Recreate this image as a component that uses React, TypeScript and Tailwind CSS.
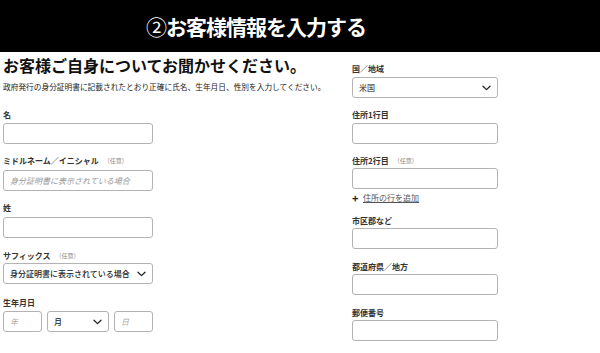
import React from "react";

const F = { fontFamily: '"Noto Sans CJK JP", "Noto Sans", sans-serif' };

function Chevron() {
  return (
    <svg width="9" height="6" viewBox="0 0 9 6" className="shrink-0">
      <path d="M1 1.2 L4.5 4.6 L8 1.2" fill="none" stroke="#222" strokeWidth="1.3" strokeLinecap="round" strokeLinejoin="round" />
    </svg>
  );
}

function Label({ text, opt }: { text: string; opt?: boolean }) {
  return (
    <div className="h-[12px] leading-[12px] text-[8px] font-bold text-[#333] flex items-center whitespace-nowrap">
      {text}
      {opt && <span className="ml-[5px] text-[6px] font-normal text-[#888]">（任意）</span>}
    </div>
  );
}

function Box({ w = "w-[150px]", children, cls = "" }: { w?: string; children?: React.ReactNode; cls?: string }) {
  return (
    <div className={`${w} h-[21px] border border-[#b3b3b3] rounded-[3px] bg-white flex items-center px-[6px] ${cls}`}>
      {children}
    </div>
  );
}

export default function App() {
  return (
    <div className="w-[600px] h-[353px] bg-white overflow-hidden" style={F}>
      <div className="h-[52px] bg-black flex items-center pl-[146px]">
        <span className="text-white font-bold text-[21px] tracking-[-1px] leading-none whitespace-nowrap">
          <span className="font-normal">②</span>お客様情報を入力する
        </span>
      </div>
      <div className="flex">
        <div className="w-[352px] pl-[3px] flex flex-col">
          <div className="mt-[3px] text-[16px] leading-[20px] font-bold text-[#111] whitespace-nowrap">お客様ご自身についてお聞かせください。</div>
          <div className="mt-[7px] text-[7.7px] leading-[10px] text-[#222] whitespace-nowrap">政府発行の身分証明書に記載されたとおり正確に氏名、生年月日、性別を入力してください。</div>

          <div className="mt-[17px]">
            <Label text="名" />
            <div className="mt-[2px]"><Box /></div>
          </div>

          <div className="mt-[11px]">
            <Label text="ミドルネーム／イニシャル" opt />
            <div className="mt-[3px]">
              <Box>
                <span className="text-[8px] italic text-[#9a9a9a] whitespace-nowrap">身分証明書に表示されている場合</span>
              </Box>
            </div>
          </div>

          <div className="mt-[11px]">
            <Label text="姓" />
            <div className="mt-[3px]"><Box /></div>
          </div>

          <div className="mt-[12px]">
            <Label text="サフィックス" opt />
            <div className="mt-[1px]">
              <Box cls="justify-between">
                <span className="text-[8px] font-medium text-[#222] whitespace-nowrap">身分証明書に表示されている場合</span>
                <Chevron />
              </Box>
            </div>
          </div>

          <div className="mt-[13px]">
            <Label text="生年月日" />
            <div className="mt-[2px] flex gap-[5px]">
              <Box w="w-[39px]"><span className="text-[8px] italic text-[#aaa]">年</span></Box>
              <Box w="w-[62px]" cls="justify-between"><span className="text-[8px] font-medium text-[#222]">月</span><Chevron /></Box>
              <Box w="w-[39px]"><span className="text-[8px] italic text-[#aaa]">日</span></Box>
            </div>
          </div>
        </div>

        <div className="w-[146px] flex flex-col">
          <div className="mt-[11px]">
            <Label text="国／地域" />
            <div className="mt-[2px]">
              <Box w="w-[146px]" cls="justify-between">
                <span className="text-[8px] text-[#222]">米国</span>
                <Chevron />
              </Box>
            </div>
          </div>

          <div className="mt-[11px]">
            <Label text="住所1行目" />
            <div className="mt-[2px]"><Box w="w-[146px]" /></div>
          </div>

          <div className="mt-[11px]">
            <Label text="住所2行目" opt />
            <div className="mt-[1px]"><Box w="w-[146px]" /></div>
          </div>

          <div className="mt-[3px] h-[12px] flex items-center gap-[3px]">
            <span className="text-[11px] font-bold leading-none text-[#222] w-[8px]">+</span>
            <span className="text-[8px] text-[#555] underline whitespace-nowrap">住所の行を追加</span>
          </div>

          <div className="mt-[11px]">
            <Label text="市区郡など" />
            <div className="mt-[1px]"><Box w="w-[146px]" /></div>
          </div>

          <div className="mt-[12px]">
            <Label text="都道府県／地方" />
            <div className="mt-[1px]"><Box w="w-[146px]" /></div>
          </div>

          <div className="mt-[12px]">
            <Label text="郵便番号" />
            <div className="mt-[1px]"><Box w="w-[146px]" /></div>
          </div>
        </div>
      </div>
    </div>
  );
}
